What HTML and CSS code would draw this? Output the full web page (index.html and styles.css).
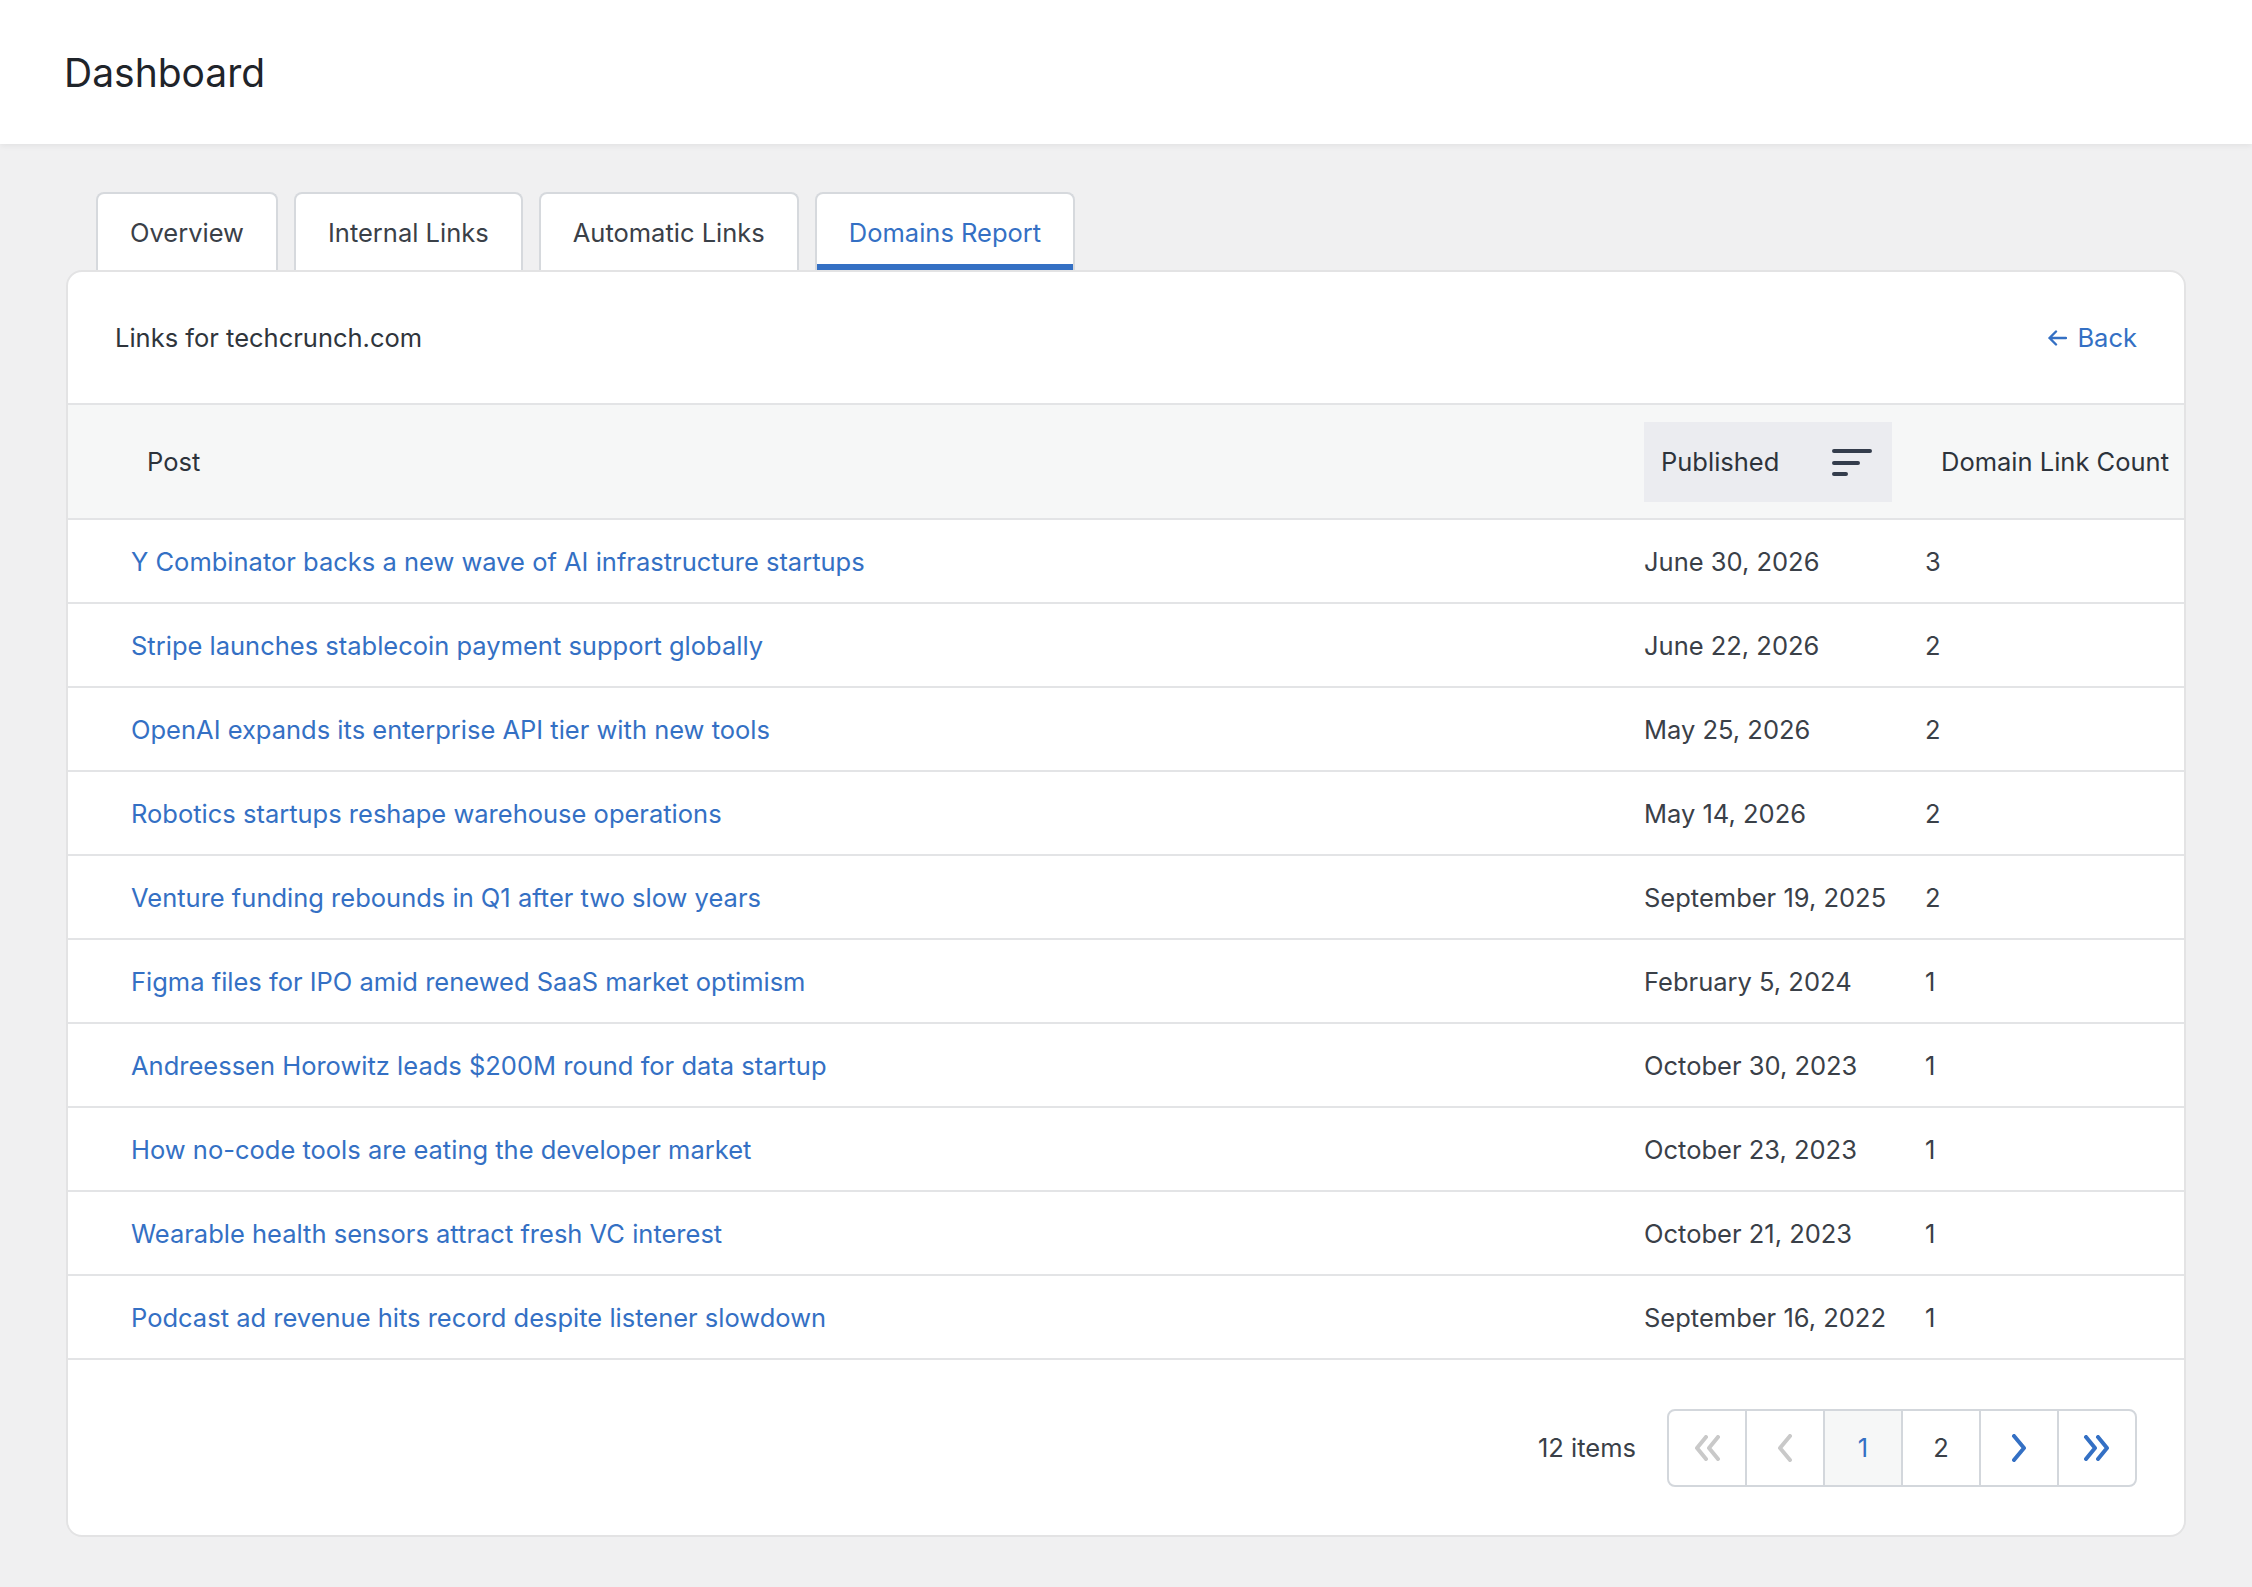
FILE: index.html
```html
<!DOCTYPE html>
<html>
<head>
	<meta charset="utf-8"/>
	<title>Dashboard</title>
	<link rel="stylesheet" href="styles.css">
</head>
<body>
	<div class="topbar">
		<h1>Dashboard</h1>
	</div>
	<div class="main">
		<ul class="tabs">
			<li class="tab">Overview</li>
			<li class="tab">Internal Links</li>
			<li class="tab">Automatic Links</li>
			<li class="tab active">Domains Report</li>
		</ul>
		<div class="card">
			<div class="card-head">
				<span class="card-title">Links for techcrunch.com</span>
				<a class="back" href="javascript:void(0)">
					<svg width="20" height="16" viewBox="0 0 20 16"><path d="M9 1.5L2.5 8L9 14.5M2.5 8H19" fill="none" stroke="currentColor" stroke-width="2.4" stroke-linecap="round" stroke-linejoin="round"/></svg>
					Back
				</a>
			</div>
			<table class="links">
				<colgroup>
					<col style="width:1576px">
					<col style="width:281px">
					<col>
				</colgroup>
				<thead>
					<tr>
						<th class="col-post">Post</th>
						<th class="col-date">
							<div class="sorted">
								<span>Published</span>
								<svg width="42" height="30" viewBox="0 0 42 30"><path d="M3 4H39M3 16H27M3 27H15" fill="none" stroke="#343d4c" stroke-width="4" stroke-linecap="round"/></svg>
							</div>
						</th>
						<th class="col-count">Domain Link Count</th>
					</tr>
				</thead>
				<tbody>
					<tr><td><a href="javascript:void(0)">Y Combinator backs a new wave of AI infrastructure startups</a></td><td>June 30, 2026</td><td>3</td></tr>
					<tr><td><a href="javascript:void(0)">Stripe launches stablecoin payment support globally</a></td><td>June 22, 2026</td><td>2</td></tr>
					<tr><td><a href="javascript:void(0)">OpenAI expands its enterprise API tier with new tools</a></td><td>May 25, 2026</td><td>2</td></tr>
					<tr><td><a href="javascript:void(0)">Robotics startups reshape warehouse operations</a></td><td>May 14, 2026</td><td>2</td></tr>
					<tr><td><a href="javascript:void(0)">Venture funding rebounds in Q1 after two slow years</a></td><td>September 19, 2025</td><td>2</td></tr>
					<tr><td><a href="javascript:void(0)">Figma files for IPO amid renewed SaaS market optimism</a></td><td>February 5, 2024</td><td>1</td></tr>
					<tr><td><a href="javascript:void(0)">Andreessen Horowitz leads $200M round for data startup</a></td><td>October 30, 2023</td><td>1</td></tr>
					<tr><td><a href="javascript:void(0)">How no-code tools are eating the developer market</a></td><td>October 23, 2023</td><td>1</td></tr>
					<tr><td><a href="javascript:void(0)">Wearable health sensors attract fresh VC interest</a></td><td>October 21, 2023</td><td>1</td></tr>
					<tr><td><a href="javascript:void(0)">Podcast ad revenue hits record despite listener slowdown</a></td><td>September 16, 2022</td><td>1</td></tr>
				</tbody>
			</table>
			<div class="card-foot">
				<span class="count">12 items</span>
				<div class="pager">
					<span class="page off"><svg width="30" height="26" viewBox="0 0 30 26"><path d="M14 2L5 13L14 24M26 2L17 13L26 24" fill="none" stroke="currentColor" stroke-width="4" stroke-linecap="round" stroke-linejoin="round"/></svg></span>
					<span class="page off"><svg width="18" height="28" viewBox="0 0 18 28"><path d="M14 2L4 14L14 26" fill="none" stroke="currentColor" stroke-width="4" stroke-linecap="round" stroke-linejoin="round"/></svg></span>
					<span class="page current">1</span>
					<span class="page">2</span>
					<span class="page on"><svg width="18" height="28" viewBox="0 0 18 28"><path d="M4 2L14 14L4 26" fill="none" stroke="currentColor" stroke-width="4" stroke-linecap="round" stroke-linejoin="round"/></svg></span>
					<span class="page on"><svg width="30" height="26" viewBox="0 0 30 26"><path d="M4 2L13 13L4 24M16 2L25 13L16 24" fill="none" stroke="currentColor" stroke-width="4" stroke-linecap="round" stroke-linejoin="round"/></svg></span>
				</div>
			</div>
		</div>
	</div>
</body>
</html>
```

FILE: styles.css
```css
*{
	margin:0;
	padding:0;
	box-sizing:border-box;
}
body{
	background:#f0f0f1;
	font-family:Inter, "Liberation Sans", Arial, sans-serif;
	font-size:25.5px;
	color:#3a4048;
}
a{
	color:#3470c4;
	text-decoration:none;
}
.topbar{
	height:144px;
	background:#fff;
	box-shadow:0 2px 6px rgba(0,0,0,0.06);
	display:flex;
	align-items:center;
	padding-left:64px;
}
.topbar h1{
	font-size:39px;
	font-weight:400;
	color:#1f242a;
}
.main{
	padding:48px 66px 50px;
}
.tabs{
	display:flex;
	gap:16px;
	padding-left:30px;
	list-style:none;
}
.tab{
	height:78px;
	padding:0 32px;
	display:flex;
	align-items:center;
	background:#fff;
	border:2px solid #d6d9dd;
	border-bottom:0;
	border-radius:8px 8px 0 0;
	color:#3a4048;
}
.tab.active{
	color:#3470c4;
	box-shadow:inset 0 -6px 0 #3470c4;
}
.card{
	background:#fff;
	border:2px solid #e3e3e4;
	border-radius:16px;
	overflow:hidden;
}
.card-head{
	height:133px;
	display:flex;
	justify-content:space-between;
	align-items:center;
	padding:0 47px;
	border-bottom:2px solid #e3e4e6;
	color:#2f353c;
}
.back{
	display:flex;
	align-items:center;
	gap:10px;
}
.links{
	width:100%;
	table-layout:fixed;
	border-collapse:collapse;
}
.links thead tr{
	height:114px;
	background:#f6f7f7;
	border-bottom:2px solid #e3e4e6;
}
.links th{
	font-weight:400;
	text-align:left;
	color:#2d333b;
	padding:0 16px;
	white-space:nowrap;
}
.links th.col-post{
	padding-left:79px;
}
.links th.col-date{
	padding:0;
}
.sorted{
	height:80px;
	width:248px;
	background:#ebecf0;
	display:flex;
	align-items:center;
	justify-content:space-between;
	padding:0 19px 0 17px;
}
.links tbody tr{
	height:84px;
	border-bottom:2px solid #e3e4e6;
}
.links td{
	padding:0;
	white-space:nowrap;
}
.links td:first-child{
	padding-left:63px;
}
.card-foot{
	height:175px;
	display:flex;
	justify-content:flex-end;
	align-items:center;
	gap:31px;
	padding-right:47px;
}
.pager{
	display:flex;
	border:2px solid #d3d7dc;
	border-radius:8px;
	overflow:hidden;
}
.page{
	flex:none;
	width:78px;
	height:74px;
	display:flex;
	align-items:center;
	justify-content:center;
	border-left:2px solid #d3d7dc;
	color:#3a4048;
}
.page:first-child{
	width:76px;
	border-left:0;
}
.page.off{
	color:#c9c9c9;
}
.page.on{
	color:#3470c4;
}
.page.current{
	background:#f6f7f7;
	color:#3470c4;
}
```
